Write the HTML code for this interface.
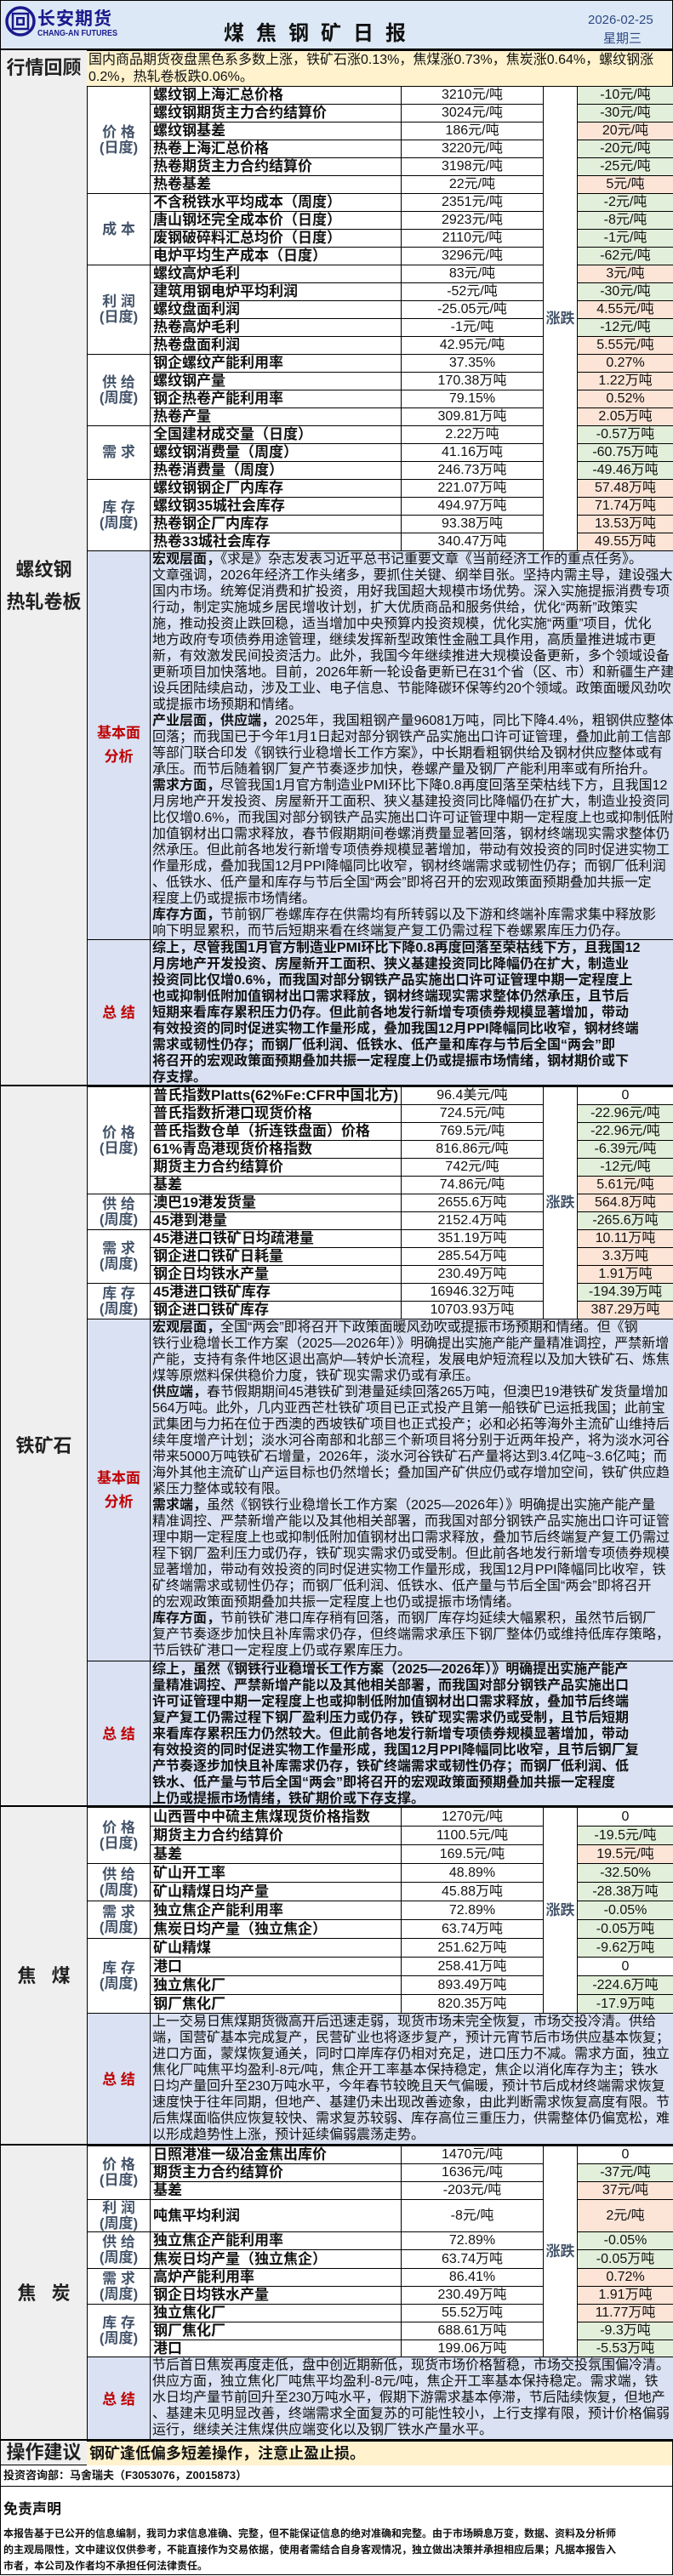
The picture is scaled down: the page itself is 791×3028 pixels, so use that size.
<!DOCTYPE html>
<html><head><meta charset="utf-8">
<style>
*{margin:0;padding:0;box-sizing:border-box}
body{width:791px;height:3028px;background:#fff;position:relative;overflow:hidden;font-family:"Liberation Sans","Noto Sans CJK SC",sans-serif;color:#111}
.abs{position:absolute}
.sec{position:absolute;left:0;width:791px;overflow:hidden}
.lab{position:absolute;left:0;top:0;width:103px;height:100%;background:#efefef;border-left:1px solid #000;border-right:1px solid #000;display:flex;align-items:center;justify-content:center;text-align:center;font-weight:bold;font-size:22px;line-height:38px;color:#222}
table{position:absolute;left:102px;top:0;width:689px;border-collapse:collapse;table-layout:fixed}
td{border:1px solid #000;overflow:hidden;white-space:nowrap;font-size:16px;padding:0;line-height:18px;height:21px}
td.k{text-align:center;color:#44546a;font-weight:bold;font-size:17px;line-height:18px;background:#fff}
td.n{font-weight:bold;font-size:17px;padding-left:3px;background:#fff}
td.v{text-align:center;background:#fff}
td.z{text-align:center;color:#44546a;font-weight:bold;font-size:17px;background:#fff}
td.g{text-align:center;background:#e2efda}
td.p{text-align:center;background:#fce4d6}
td.w{text-align:center;background:#fff}
td.r{text-align:center;color:#c00000;font-weight:bold;font-size:17px;line-height:28px;background:#d9e1f2}
td.x{background:#d9e1f2;vertical-align:top;line-height:19px;padding:0 2px;font-size:16px}
td.x.bb{font-weight:bold}
.thick{border-top:2px solid #000}
</style></head><body>

<!-- header -->
<div class="sec" style="top:0;height:59px;background:#dce8f5;border:1px solid #000;border-bottom:2px solid #000">
  <svg class="abs" style="left:5px;top:6px" width="36" height="36" viewBox="0 0 36 36">
    <circle cx="18" cy="18" r="16" fill="none" stroke="#1a1a8c" stroke-width="3.5"/>
    <rect x="9" y="9" width="18" height="18" fill="none" stroke="#1a1a8c" stroke-width="2.5"/>
    <rect x="13" y="13" width="10" height="10" fill="#1a1a8c"/>
    <rect x="15.5" y="15.5" width="5" height="5" fill="#dce8f5"/>
  </svg>
  <div class="abs" style="left:43px;top:5px;font-size:21px;font-weight:bold;color:#1a1a8c;letter-spacing:1px">长安期货</div>
  <div class="abs" style="left:43px;top:33px;font-size:10px;font-weight:bold;color:#1a1a8c;transform:scaleX(0.9);transform-origin:left">CHANG-AN FUTURES</div>
  <div class="abs" style="left:262px;top:18px;font-size:24px;font-weight:bold;letter-spacing:14px;color:#111">煤焦钢矿日报</div>
  <div class="abs" style="left:690px;top:14px;font-size:15px;color:#2e4a86">2026-02-25</div>
  <div class="abs" style="left:708px;top:33px;font-size:15px;color:#2e4a86">星期三</div>
</div>

<!-- 行情回顾 -->
<div class="sec" style="top:59px;height:43px">
  <div class="lab" style="border-bottom:1px solid #000">行情回顾</div>
  <div class="abs" style="left:102px;top:0;width:689px;height:43px;background:#fff2cc;border:1px solid #000;border-left:0;font-size:16px;line-height:20px;padding:1px 2px;white-space:nowrap;overflow:hidden">国内商品期货夜盘黑色系多数上涨，铁矿石涨0.13%，焦煤涨0.73%，焦炭涨0.64%，螺纹钢涨<br>0.2%，热轧卷板跌0.06%。</div>
</div>

<!-- 螺纹钢 -->
<div class="sec" style="top:101px;height:1175px">
  <div class="lab">螺纹钢<br>热轧卷板</div>
  <table style="height:546px">
    <colgroup><col style="width:74px"><col style="width:295px"><col style="width:167px"><col style="width:40px"><col style="width:113px"></colgroup>
    <tr style="height:21px"><td class="k" rowspan="6">价 格<br>(日度)</td><td class="n">螺纹钢上海汇总价格</td><td class="v">3210元/吨</td><td class="z" rowspan="26">涨跌</td><td class="g">-10元/吨</td></tr>
    <tr style="height:21px"><td class="n">螺纹钢期货主力合约结算价</td><td class="v">3024元/吨</td><td class="g">-30元/吨</td></tr>
    <tr style="height:21px"><td class="n">螺纹钢基差</td><td class="v">186元/吨</td><td class="p">20元/吨</td></tr>
    <tr style="height:21px"><td class="n">热卷上海汇总价格</td><td class="v">3220元/吨</td><td class="g">-20元/吨</td></tr>
    <tr style="height:21px"><td class="n">热卷期货主力合约结算价</td><td class="v">3198元/吨</td><td class="g">-25元/吨</td></tr>
    <tr style="height:21px"><td class="n">热卷基差</td><td class="v">22元/吨</td><td class="p">5元/吨</td></tr>
    <tr style="height:21px"><td class="k" rowspan="4">成 本</td><td class="n">不含税铁水平均成本（周度）</td><td class="v">2351元/吨</td><td class="g">-2元/吨</td></tr>
    <tr style="height:21px"><td class="n">唐山钢坯完全成本价（日度）</td><td class="v">2923元/吨</td><td class="g">-8元/吨</td></tr>
    <tr style="height:21px"><td class="n">废钢破碎料汇总均价（日度）</td><td class="v">2110元/吨</td><td class="g">-1元/吨</td></tr>
    <tr style="height:21px"><td class="n">电炉平均生产成本（日度）</td><td class="v">3296元/吨</td><td class="g">-62元/吨</td></tr>
    <tr style="height:21px"><td class="k" rowspan="5">利 润<br>(日度)</td><td class="n">螺纹高炉毛利</td><td class="v">83元/吨</td><td class="p">3元/吨</td></tr>
    <tr style="height:21px"><td class="n">建筑用钢电炉平均利润</td><td class="v">-52元/吨</td><td class="g">-30元/吨</td></tr>
    <tr style="height:21px"><td class="n">螺纹盘面利润</td><td class="v">-25.05元/吨</td><td class="p">4.55元/吨</td></tr>
    <tr style="height:21px"><td class="n">热卷高炉毛利</td><td class="v">-1元/吨</td><td class="g">-12元/吨</td></tr>
    <tr style="height:21px"><td class="n">热卷盘面利润</td><td class="v">42.95元/吨</td><td class="p">5.55元/吨</td></tr>
    <tr style="height:21px"><td class="k" rowspan="4">供 给<br>(周度)</td><td class="n">钢企螺纹产能利用率</td><td class="v">37.35%</td><td class="p">0.27%</td></tr>
    <tr style="height:21px"><td class="n">螺纹钢产量</td><td class="v">170.38万吨</td><td class="p">1.22万吨</td></tr>
    <tr style="height:21px"><td class="n">钢企热卷产能利用率</td><td class="v">79.15%</td><td class="p">0.52%</td></tr>
    <tr style="height:21px"><td class="n">热卷产量</td><td class="v">309.81万吨</td><td class="p">2.05万吨</td></tr>
    <tr style="height:21px"><td class="k" rowspan="3">需 求</td><td class="n">全国建材成交量（日度）</td><td class="v">2.22万吨</td><td class="g">-0.57万吨</td></tr>
    <tr style="height:21px"><td class="n">螺纹钢消费量（周度）</td><td class="v">41.16万吨</td><td class="g">-60.75万吨</td></tr>
    <tr style="height:21px"><td class="n">热卷消费量（周度）</td><td class="v">246.73万吨</td><td class="g">-49.46万吨</td></tr>
    <tr style="height:21px"><td class="k" rowspan="4">库 存<br>(周度)</td><td class="n">螺纹钢钢企厂内库存</td><td class="v">221.07万吨</td><td class="p">57.48万吨</td></tr>
    <tr style="height:21px"><td class="n">螺纹钢35城社会库存</td><td class="v">494.97万吨</td><td class="p">71.74万吨</td></tr>
    <tr style="height:21px"><td class="n">热卷钢企厂内库存</td><td class="v">93.38万吨</td><td class="p">13.53万吨</td></tr>
    <tr style="height:21px"><td class="n">热卷33城社会库存</td><td class="v">340.47万吨</td><td class="p">49.55万吨</td></tr>
  </table>
  <table style="top:546px;height:629px">
    <colgroup><col style="width:74px"><col style="width:615px"></colgroup>
    <tr style="height:457px"><td class="r" style="height:457px">基本面<br>分析</td><td class="x" style="height:457px"><b>宏观层面，</b>《求是》杂志发表习近平总书记重要文章《当前经济工作的重点任务》。<br>文章强调，2026年经济工作头绪多，要抓住关键、纲举目张。坚持内需主导，建设强大<br>国内市场。统筹促消费和扩投资，用好我国超大规模市场优势。深入实施提振消费专项<br>行动，制定实施城乡居民增收计划，扩大优质商品和服务供给，优化“两新”政策实<br>施，推动投资止跌回稳，适当增加中央预算内投资规模，优化实施“两重”项目，优化<br>地方政府专项债券用途管理，继续发挥新型政策性金融工具作用，高质量推进城市更<br>新，有效激发民间投资活力。此外，我国今年继续推进大规模设备更新，多个领域设备<br>更新项目加快落地。目前，2026年新一轮设备更新已在31个省（区、市）和新疆生产建<br>设兵团陆续启动，涉及工业、电子信息、节能降碳环保等约20个领域。政策面暖风劲吹<br>或提振市场预期和情绪。<br><b>产业层面，供应端，</b>2025年，我国粗钢产量96081万吨，同比下降4.4%，粗钢供应整体<br>回落；而我国已于今年1月1日起对部分钢铁产品实施出口许可证管理，叠加此前工信部<br>等部门联合印发《钢铁行业稳增长工作方案》，中长期看粗钢供给及钢材供应整体或有<br>承压。而节后随着钢厂复产节奏逐步加快，卷螺产量及钢厂产能利用率或有所抬升。<br><b>需求方面，</b>尽管我国1月官方制造业PMI环比下降0.8再度回落至荣枯线下方，且我国12<br>月房地产开发投资、房屋新开工面积、狭义基建投资同比降幅仍在扩大，制造业投资同<br>比仅增0.6%，而我国对部分钢铁产品实施出口许可证管理中期一定程度上也或抑制低附<br>加值钢材出口需求释放，春节假期期间卷螺消费量显著回落，钢材终端现实需求整体仍<br>然承压。但此前各地发行新增专项债券规模显著增加，带动有效投资的同时促进实物工<br>作量形成，叠加我国12月PPI降幅同比收窄，钢材终端需求或韧性仍存；而钢厂低利润<br>、低铁水、低产量和库存与节后全国“两会”即将召开的宏观政策面预期叠加共振一定<br>程度上仍或提振市场情绪。<br><b>库存方面，</b>节前钢厂卷螺库存在供需均有所转弱以及下游和终端补库需求集中释放影<br>响下明显累积，而节后短期来看在终端复产复工仍需过程下卷螺累库压力仍存。</td></tr>
    <tr style="height:172px"><td class="r" style="height:172px">总 结</td><td class="x bb" style="height:172px">综上，尽管我国1月官方制造业PMI环比下降0.8再度回落至荣枯线下方，且我国12<br>月房地产开发投资、房屋新开工面积、狭义基建投资同比降幅仍在扩大，制造业<br>投资同比仅增0.6%，而我国对部分钢铁产品实施出口许可证管理中期一定程度上<br>也或抑制低附加值钢材出口需求释放，钢材终端现实需求整体仍然承压，且节后<br>短期来看库存累积压力仍存。但此前各地发行新增专项债券规模显著增加，带动<br>有效投资的同时促进实物工作量形成，叠加我国12月PPI降幅同比收窄，钢材终端<br>需求或韧性仍存；而钢厂低利润、低铁水、低产量和库存与节后全国“两会”即<br>将召开的宏观政策面预期叠加共振一定程度上仍或提振市场情绪，钢材期价或下<br>存支撑。</td></tr>
  </table>
</div>

<!-- 铁矿石 -->
<div class="sec thick" style="top:1275px;height:848px">
  <div class="lab">铁矿石</div>
  <table style="height:273px">
    <colgroup><col style="width:74px"><col style="width:295px"><col style="width:167px"><col style="width:40px"><col style="width:113px"></colgroup>
    <tr style="height:21px"><td class="k" rowspan="6">价 格<br>(日度)</td><td class="n">普氏指数Platts(62%Fe:CFR中国北方)</td><td class="v">96.4美元/吨</td><td class="z" rowspan="13">涨跌</td><td class="w">0</td></tr>
    <tr style="height:21px"><td class="n">普氏指数折港口现货价格</td><td class="v">724.5元/吨</td><td class="g">-22.96元/吨</td></tr>
    <tr style="height:21px"><td class="n">普氏指数仓单（折连铁盘面）价格</td><td class="v">769.5元/吨</td><td class="g">-22.96元/吨</td></tr>
    <tr style="height:21px"><td class="n">61%青岛港现货价格指数</td><td class="v">816.86元/吨</td><td class="g">-6.39元/吨</td></tr>
    <tr style="height:21px"><td class="n">期货主力合约结算价</td><td class="v">742元/吨</td><td class="g">-12元/吨</td></tr>
    <tr style="height:21px"><td class="n">基差</td><td class="v">74.86元/吨</td><td class="p">5.61元/吨</td></tr>
    <tr style="height:21px"><td class="k" rowspan="2">供 给<br>(周度)</td><td class="n">澳巴19港发货量</td><td class="v">2655.6万吨</td><td class="p">564.8万吨</td></tr>
    <tr style="height:21px"><td class="n">45港到港量</td><td class="v">2152.4万吨</td><td class="g">-265.6万吨</td></tr>
    <tr style="height:21px"><td class="k" rowspan="3">需 求<br>(周度)</td><td class="n">45港进口铁矿日均疏港量</td><td class="v">351.19万吨</td><td class="p">10.11万吨</td></tr>
    <tr style="height:21px"><td class="n">钢企进口铁矿日耗量</td><td class="v">285.54万吨</td><td class="p">3.3万吨</td></tr>
    <tr style="height:21px"><td class="n">钢企日均铁水产量</td><td class="v">230.49万吨</td><td class="p">1.91万吨</td></tr>
    <tr style="height:21px"><td class="k" rowspan="2">库 存<br>(周度)</td><td class="n">45港进口铁矿库存</td><td class="v">16946.32万吨</td><td class="g">-194.39万吨</td></tr>
    <tr style="height:21px"><td class="n">钢企进口铁矿库存</td><td class="v">10703.93万吨</td><td class="p">387.29万吨</td></tr>
  </table>
  <table style="top:273px;height:575px">
    <colgroup><col style="width:74px"><col style="width:615px"></colgroup>
    <tr style="height:402px"><td class="r" style="height:402px">基本面<br>分析</td><td class="x" style="height:402px"><b>宏观层面，</b>全国“两会”即将召开下政策面暖风劲吹或提振市场预期和情绪。但《钢<br>铁行业稳增长工作方案（2025—2026年）》明确提出实施产能产量精准调控，严禁新增<br>产能，支持有条件地区退出高炉—转炉长流程，发展电炉短流程以及加大铁矿石、炼焦<br>煤等原燃料保供稳价力度，铁矿现实需求仍或有承压。<br><b>供应端，</b>春节假期期间45港铁矿到港量延续回落265万吨，但澳巴19港铁矿发货量增加<br>564万吨。此外，几内亚西芒杜铁矿项目已正式投产且第一船铁矿已运抵我国；此前宝<br>武集团与力拓在位于西澳的西坡铁矿项目也正式投产；必和必拓等海外主流矿山维持后<br>续年度增产计划；淡水河谷南部和北部三个新项目将分别于近两年投产，将为淡水河谷<br>带来5000万吨铁矿石增量，2026年，淡水河谷铁矿石产量将达到3.4亿吨~3.6亿吨；而<br>海外其他主流矿山产运目标也仍然增长；叠加国产矿供应仍或存增加空间，铁矿供应趋<br>紧压力整体或较有限。<br><b>需求端，</b>虽然《钢铁行业稳增长工作方案（2025—2026年）》明确提出实施产能产量<br>精准调控、严禁新增产能以及其他相关部署，而我国对部分钢铁产品实施出口许可证管<br>理中期一定程度上也或抑制低附加值钢材出口需求释放，叠加节后终端复产复工仍需过<br>程下钢厂盈利压力或仍存，铁矿现实需求仍或受制。但此前各地发行新增专项债券规模<br>显著增加，带动有效投资的同时促进实物工作量形成，我国12月PPI降幅同比收窄，铁<br>矿终端需求或韧性仍存；而钢厂低利润、低铁水、低产量与节后全国“两会”即将召开<br>的宏观政策面预期叠加共振一定程度上也仍或提振市场情绪。<br><b>库存方面，</b>节前铁矿港口库存稍有回落，而钢厂库存均延续大幅累积，虽然节后钢厂<br>复产节奏逐步加快且补库需求仍存，但终端需求承压下钢厂整体仍或维持低库存策略，<br>节后铁矿港口一定程度上仍或存累库压力。</td></tr>
    <tr style="height:173px"><td class="r" style="height:173px">总 结</td><td class="x bb" style="height:173px">综上，虽然《钢铁行业稳增长工作方案（2025—2026年）》明确提出实施产能产<br>量精准调控、严禁新增产能以及其他相关部署，而我国对部分钢铁产品实施出口<br>许可证管理中期一定程度上也或抑制低附加值钢材出口需求释放，叠加节后终端<br>复产复工仍需过程下钢厂盈利压力或仍存，铁矿现实需求仍或受制，且节后短期<br>来看库存累积压力仍然较大。但此前各地发行新增专项债券规模显著增加，带动<br>有效投资的同时促进实物工作量形成，我国12月PPI降幅同比收窄，且节后钢厂复<br>产节奏逐步加快且补库需求仍存，铁矿终端需求或韧性仍存；而钢厂低利润、低<br>铁水、低产量与节后全国“两会”即将召开的宏观政策面预期叠加共振一定程度<br>上仍或提振市场情绪，铁矿期价或下存支撑。</td></tr>
  </table>
</div>

<!-- 焦煤 -->
<div class="sec thick" style="top:2122px;height:399px">
  <div class="lab">焦&nbsp;&nbsp;&nbsp;煤</div>
  <table style="height:242px">
    <colgroup><col style="width:74px"><col style="width:295px"><col style="width:167px"><col style="width:40px"><col style="width:113px"></colgroup>
    <tr style="height:22px"><td class="k" rowspan="3">价 格<br>(日度)</td><td class="n">山西晋中中硫主焦煤现货价格指数</td><td class="v">1270元/吨</td><td class="z" rowspan="11">涨跌</td><td class="w">0</td></tr>
    <tr style="height:22px"><td class="n">期货主力合约结算价</td><td class="v">1100.5元/吨</td><td class="g">-19.5元/吨</td></tr>
    <tr style="height:22px"><td class="n">基差</td><td class="v">169.5元/吨</td><td class="p">19.5元/吨</td></tr>
    <tr style="height:22px"><td class="k" rowspan="2">供 给<br>(周度)</td><td class="n">矿山开工率</td><td class="v">48.89%</td><td class="g">-32.50%</td></tr>
    <tr style="height:22px"><td class="n">矿山精煤日均产量</td><td class="v">45.88万吨</td><td class="g">-28.38万吨</td></tr>
    <tr style="height:22px"><td class="k" rowspan="2">需 求<br>(周度)</td><td class="n">独立焦企产能利用率</td><td class="v">72.89%</td><td class="g">-0.05%</td></tr>
    <tr style="height:22px"><td class="n">焦炭日均产量（独立焦企）</td><td class="v">63.74万吨</td><td class="g">-0.05万吨</td></tr>
    <tr style="height:22px"><td class="k" rowspan="4">库 存<br>(周度)</td><td class="n">矿山精煤</td><td class="v">251.62万吨</td><td class="g">-9.62万吨</td></tr>
    <tr style="height:22px"><td class="n">港口</td><td class="v">258.41万吨</td><td class="w">0</td></tr>
    <tr style="height:22px"><td class="n">独立焦化厂</td><td class="v">893.49万吨</td><td class="g">-224.6万吨</td></tr>
    <tr style="height:22px"><td class="n">钢厂焦化厂</td><td class="v">820.35万吨</td><td class="g">-17.9万吨</td></tr>
  </table>
  <table style="top:242px;height:157px">
    <colgroup><col style="width:74px"><col style="width:615px"></colgroup>
    <tr style="height:157px"><td class="r" style="height:157px">总 结</td><td class="x" style="height:157px">上一交易日焦煤期货微高开后迅速走弱，现货市场未完全恢复，市场交投冷清。供给<br>端，国营矿基本完成复产，民营矿业也将逐步复产，预计元宵节后市场供应基本恢复；<br>进口方面，蒙煤恢复通关，同时口岸库存仍相对充足，进口压力不减。需求方面，独立<br>焦化厂吨焦平均盈利-8元/吨，焦企开工率基本保持稳定，焦企以消化库存为主；铁水<br>日均产量回升至230万吨水平，今年春节较晚且天气偏暖，预计节后成材终端需求恢复<br>速度快于往年同期，但地产、基建仍未出现改善迹象，由此判断需求恢复高度有限。节<br>后焦煤面临供应恢复较快、需求复苏较弱、库存高位三重压力，供需整体仍偏宽松，难<br>以形成趋势性上涨，预计延续偏弱震荡走势。</td></tr>
  </table>
</div>

<!-- 焦炭 -->
<div class="sec thick" style="top:2520px;height:349px">
  <div class="lab">焦&nbsp;&nbsp;&nbsp;炭</div>
  <table style="height:248px">
    <colgroup><col style="width:74px"><col style="width:295px"><col style="width:167px"><col style="width:40px"><col style="width:113px"></colgroup>
    <tr style="height:21px"><td class="k" rowspan="3">价 格<br>(日度)</td><td class="n">日照港准一级冶金焦出库价</td><td class="v">1470元/吨</td><td class="z" rowspan="11">涨跌</td><td class="w">0</td></tr>
    <tr style="height:21px"><td class="n">期货主力合约结算价</td><td class="v">1636元/吨</td><td class="g">-37元/吨</td></tr>
    <tr style="height:21px"><td class="n">基差</td><td class="v">-203元/吨</td><td class="p">37元/吨</td></tr>
    <tr style="height:38px"><td class="k" style="height:38px">利 润<br>(周度)</td><td class="n" style="height:38px">吨焦平均利润</td><td class="v" style="height:38px">-8元/吨</td><td class="p" style="height:38px">2元/吨</td></tr>
    <tr style="height:21px"><td class="k" rowspan="2">供 给<br>(周度)</td><td class="n">独立焦企产能利用率</td><td class="v">72.89%</td><td class="g">-0.05%</td></tr>
    <tr style="height:22px"><td class="n">焦炭日均产量（独立焦企）</td><td class="v">63.74万吨</td><td class="g">-0.05万吨</td></tr>
    <tr style="height:20px"><td class="k" rowspan="2">需 求<br>(周度)</td><td class="n">高炉产能利用率</td><td class="v">86.41%</td><td class="p">0.72%</td></tr>
    <tr style="height:21px"><td class="n">钢企日均铁水产量</td><td class="v">230.49万吨</td><td class="p">1.91万吨</td></tr>
    <tr style="height:21px"><td class="k" rowspan="3">库 存<br>(周度)</td><td class="n">独立焦化厂</td><td class="v">55.52万吨</td><td class="p">11.77万吨</td></tr>
    <tr style="height:21px"><td class="n">钢厂焦化厂</td><td class="v">688.61万吨</td><td class="g">-9.3万吨</td></tr>
    <tr style="height:21px"><td class="n">港口</td><td class="v">199.06万吨</td><td class="g">-5.53万吨</td></tr>
  </table>
  <table style="top:248px;height:101px">
    <colgroup><col style="width:74px"><col style="width:615px"></colgroup>
    <tr style="height:101px"><td class="r" style="height:101px">总 结</td><td class="x" style="height:101px">节后首日焦炭再度走低，盘中创近期新低，现货市场价格暂稳，市场交投氛围偏冷清。<br>供应方面，独立焦化厂吨焦平均盈利-8元/吨，焦企开工率基本保持稳定。需求端，铁<br>水日均产量节前回升至230万吨水平，假期下游需求基本停滞，节后陆续恢复，但地产<br>、基建未见明显改善，终端需求全面复苏的可能性较小，上行支撑有限，预计价格偏弱<br>运行，继续关注焦煤供应端变化以及钢厂铁水产量水平。</td></tr>
  </table>
</div>

<!-- 操作建议 -->
<div class="sec thick" style="top:2867px;height:31px">
  <div class="lab" style="border-bottom:1px solid #000">操作建议</div>
  <div class="abs" style="left:102px;top:0;width:689px;height:31px;background:#fff2cc;border:1px solid #000;border-left:0;font-size:18px;font-weight:bold;line-height:29px;padding-left:3px">钢矿逢低偏多短差操作，注意止盈止损。</div>
</div>

<div class="sec" style="top:2897px;height:26px;border:1px solid #000;border-top:0;font-size:13px;font-weight:bold;line-height:25px;padding-left:3px">投资咨询部：马舍瑞夫（F3053076，Z0015873）</div>

<div class="sec" style="top:2922px;height:105px;border:1px solid #000;border-top:0;padding-left:3px">
  <div style="font-size:17px;font-weight:bold;margin-top:13px">免责声明</div>
  <div style="font-size:12px;font-weight:bold;line-height:19px;margin-top:9px;white-space:nowrap;overflow:hidden">本报告基于已公开的信息编制，我司力求信息准确、完整，但不能保证信息的绝对准确和完整。由于市场瞬息万变，数据、资料及分析师<br>的主观局限性，文中建议仅供参考，不能直接作为交易依据，使用者需结合自身客观情况，独立做出决策并承担相应后果；凡据本报告入<br>市者，本公司及作者均不承担任何法律责任。</div>
</div>

</body></html>
